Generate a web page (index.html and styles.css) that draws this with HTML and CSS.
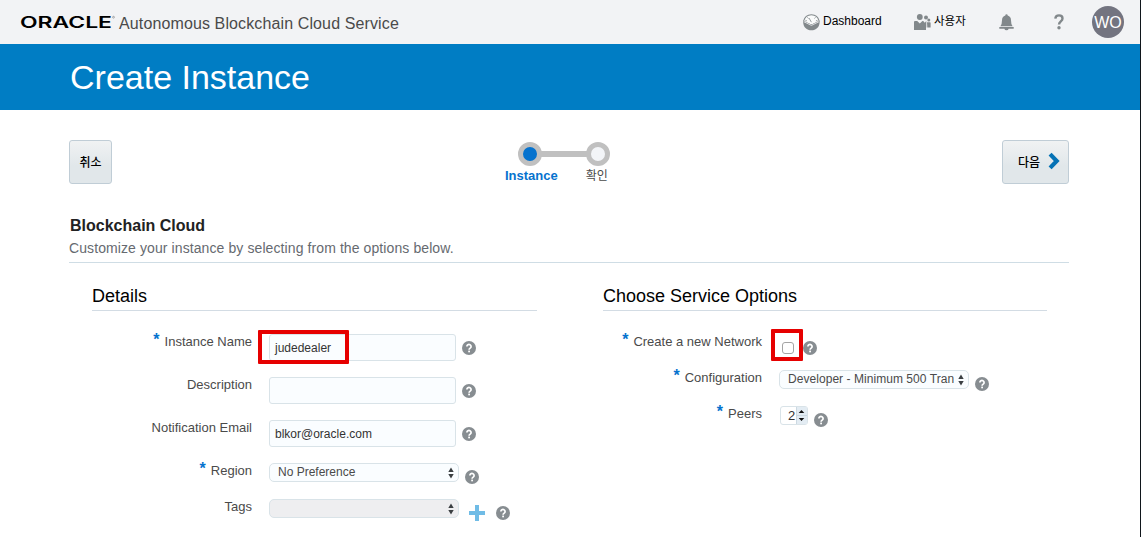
FILE: index.html
```html
<!DOCTYPE html>
<html lang="ko">
<head>
<meta charset="utf-8">
<title>Create Instance</title>
<link rel="stylesheet" href="styles.css">
</head>
<body>
<svg class="defs" aria-hidden="true">
  <symbol id="help" viewBox="0 0 14 14"><circle cx="7" cy="7" r="7" fill="#878d91"/><path d="M4.9 5.5a2.1 2 0 1 1 3.3 1.6Q7.1 7.8 7.1 8.8" fill="none" stroke="#fff" stroke-width="1.7"/><rect x="6.2" y="9.6" width="1.8" height="1.7" fill="#fff"/></symbol>
  <symbol id="sort" viewBox="0 0 6 12"><path d="M3 .5 5.7 4.9H.3zM.3 7.1h5.4L3 11.5z" fill="#3c4043"/></symbol>
</svg>
<div class="page">
  <header class="topbar">
    <svg class="logo" width="96" height="16" viewBox="0 0 96 16" role="img" aria-label="ORACLE">
      <text class="wordmark" x="-1" y="13.700" textLength="92" lengthAdjust="spacingAndGlyphs">ORACLE</text>
      <circle cx="92.500" cy="3.200" r=".9" fill="none" stroke="#777" stroke-width=".6"/>
    </svg>
    <span class="service">Autonomous Blockchain Cloud Service</span>
    <nav class="tools">
      <a class="tool dash">
        <svg width="17" height="17" viewBox="0 0 17 17"><path d="M.6 7.2C1.6 3 4.6.7 8.4.7s6.8 2.3 7.8 6.500L8.4 11.300z" fill="#fafbfb" stroke="#82888b" stroke-width="1.100"/><path d="M2.400 6.300l1.500.6M4.400 3.300l1 1.200M12.500 3.300l-1 1.200M14.500 6.300l-1.600.6M8.400 8.200 6 4" fill="none" stroke="#82888b" stroke-width=".8"/><path d="M.2 7.400l8.200 3 8.200-3C16.900 13 13.200 16.300 8.400 16.300S-.1 13 .2 7.400z" fill="#82888b"/><path d="M.8 7.700l7.600 3.700L16 7.700" fill="none" stroke="#f2f3f5" stroke-width=".8"/></svg>
        <span>Dashboard</span>
      </a>
      <a class="tool users">
        <svg width="17" height="17" viewBox="0 0 17 17" fill="#82888b"><circle cx="5.800" cy="3" r="2.900"/><circle cx="12" cy="3.400" r="2"/><circle cx="14.800" cy="5.900" r="1.500"/><path d="M0 8Q0 7 1 7h2.200L5.800 9.500 8.400 7h.8l1.600 1.700L12.300 7v6.500H12V16H0zM13 8.200h2.900q.7 0 .7.800v4.600h-3.300z"/></svg>
        <span>사용자</span>
      </a>
      <svg class="bell" width="15" height="17" viewBox="0 0 15 17" fill="#82888b"><path d="M7.500.2q1.200 0 1.200 1.300 3.300 1 3.300 4.700 0 4.200 1.600 6.100H1.400Q3 10.400 3 6.200 3 2.500 6.300 1.500 6.300.2 7.500.2zM.3 13.100h14.400v1.600H.3zM5.400 14.700h4.200q-.2 1.500-2.100 1.500t-2.100-1.500z"/></svg>
      <svg class="ask" width="10" height="16" viewBox="0 0 10 16"><path d="M1.300 4.700C1.500 2.500 3 1.400 5 1.400s3.500 1.100 3.500 3c0 2.900-3.500 2.900-3.500 6" fill="none" stroke="#82888b" stroke-width="2.400"/><circle cx="5" cy="13.700" r="1.700" fill="#82888b"/></svg>
      <span class="avatar">WO</span>
    </nav>
  </header>
  <div class="banner"><h1>Create Instance</h1></div>
  <main class="content">
    <div class="wizard">
      <button class="btn cancel">취소</button>
      <div class="train">
        <svg width="92" height="24" viewBox="0 0 92 24"><path d="M12 12h68" stroke="#c0c0c0" stroke-width="6"/><circle cx="12" cy="12" r="9.500" fill="#0572ce" stroke="#c0c0c0" stroke-width="5"/><circle cx="80" cy="12" r="9.500" fill="#f3f5f8" stroke="#c0c0c0" stroke-width="5"/></svg>
        <div class="steps"><b>Instance</b><span>확인</span></div>
      </div>
      <button class="btn next">다음<svg width="12" height="18" viewBox="0 0 12 18"><path d="M2.100 2.100 8.700 9l-6.600 6.900" fill="none" stroke="#0572b5" stroke-width="4.200"/></svg></button>
    </div>
    <div class="intro">
      <h2>Blockchain Cloud</h2>
      <p>Customize your instance by selecting from the options below.</p>
    </div>
    <div class="columns">
      <section class="col">
        <h3>Details</h3>
        <div class="row tall">
          <label class="req"><i>*</i>Instance Name</label>
          <div class="field marked-name"><span class="input">judedealer</span><svg class="help"><use href="#help"/></svg></div>
        </div>
        <div class="row tall">
          <label>Description</label>
          <div class="field"><span class="input"></span><svg class="help"><use href="#help"/></svg></div>
        </div>
        <div class="row tall">
          <label>Notification Email</label>
          <div class="field"><span class="input">blkor@oracle.com</span><svg class="help"><use href="#help"/></svg></div>
        </div>
        <div class="row">
          <label class="req"><i>*</i>Region</label>
          <div class="field"><span class="select"><span>No Preference</span><svg class="sort"><use href="#sort"/></svg></span><svg class="help"><use href="#help"/></svg></div>
        </div>
        <div class="row">
          <label>Tags</label>
          <div class="field"><span class="select off"><span></span><svg class="sort"><use href="#sort"/></svg></span><svg class="plus" viewBox="0 0 16 16"><path d="M8 0v16M0 8h16" stroke="#70bce6" stroke-width="4"/></svg><svg class="help"><use href="#help"/></svg></div>
        </div>
      </section>
      <section class="col right">
        <h3>Choose Service Options</h3>
        <div class="row">
          <label class="req"><i>*</i>Create a new Network</label>
          <div class="field marked-check"><span class="check"></span><svg class="help"><use href="#help"/></svg></div>
        </div>
        <div class="row">
          <label class="req"><i>*</i>Configuration</label>
          <div class="field"><span class="select"><span class="clip">Developer - Minimum 500 Trans</span><svg class="sort"><use href="#sort"/></svg></span><svg class="help"><use href="#help"/></svg></div>
        </div>
        <div class="row">
          <label class="req"><i>*</i>Peers</label>
          <div class="field peers"><span class="spin"><span>2</span><svg width="11" height="17" viewBox="0 0 11 17"><path d="M0 0h11v17H0z" fill="#e3ecf3"/><path d="M0 8.500h11M.5 0v17" stroke="#ccd9e2"/><path d="M5.500 3 8.300 6H2.700zM2.700 11h5.600l-2.800 3z" fill="#111"/></svg></span><svg class="help"><use href="#help"/></svg></div>
        </div>
      </section>
    </div>
  </main>
</div>
</body>
</html>
```
FILE: styles.css
```css
*, *::before { box-sizing: border-box; }
body {
  margin: 0;
  height: 537px;
  overflow: hidden;
  background: #fff;
  font-family: "Liberation Sans", "Noto Sans CJK KR", sans-serif;
  font-size: 12px;
  color: #333;
}
svg { display: block; flex: none; }
.defs { position: absolute; width: 0; height: 0; }
h1, h2, h3, p { margin: 0; font-weight: normal; }
.page { height: 537px; border-right: 1px solid #10161b; }

.topbar { display: flex; height: 44px; padding: 0 16px 0 21px; background: #f2f3f5; }
.logo { margin-top: 14px; overflow: visible; }
.wordmark { font: 600 15.5px Inter, "Liberation Sans", sans-serif; fill: #000; }
.service { margin: 14px 0 0 2px; font-size: 16px; line-height: 20px; letter-spacing: .12px; color: #4a4a4a; white-space: nowrap; }
.tools { display: flex; margin-left: auto; }
.tool { display: flex; color: #000; line-height: 14px; }
.tool svg { margin-top: 14px; }
.tool span { margin-top: 14px; white-space: nowrap; }
.dash { gap: 3px; width: 111px; }
.users { gap: 3px; width: 85px; }
.users span { font-size: 11.5px; }
.bell { margin-top: 14px; }
.ask { margin: 14px 28px 0 40px; }
.avatar { width: 32px; height: 32px; margin-top: 6px; border-radius: 50%; background: #737480; color: #fff; font-size: 16px; line-height: 33px; text-align: center; }

.banner { height: 66px; padding: 14px 0 0 70px; background: #007dc4; color: #fff; }
h1 { font-size: 34px; line-height: 38px; }

.content { padding: 30px 71px 0 69px; }
.wizard { display: flex; justify-content: space-between; height: 44px; }
.btn { height: 44px; padding: 0; border: 1px solid #c0cdd6; border-radius: 3px; background: linear-gradient(#f0f2f3, #e1e7ea 60%, #e1e7ea); color: #000; font: 500 12px "Liberation Sans", "Noto Sans CJK KR", sans-serif; }
.cancel { width: 43px; padding-bottom: 2px; }
.next { display: flex; align-items: center; gap: 8px; width: 67px; padding: 0 0 2px 15px; }
.train { width: 110px; margin: 2px 0 0 4px; }
.train > svg { margin-left: 14px; }
.steps { display: flex; gap: 28px; margin: 2px 0 0 1px; line-height: 15px; }
.steps b { font-size: 13px; color: #0572ce; }
.steps span { padding-top: 1px; white-space: nowrap; color: #4a4a4a; }

.intro { height: 79px; padding-top: 32px; border-bottom: 1px solid #cfdde5; }
h2 { margin-left: 1px; font-size: 16px; line-height: 20px; font-weight: bold; color: #222; }
.intro p { margin-top: 4px; font-size: 14px; line-height: 16px; letter-spacing: .095px; color: #666a70; }

.columns { display: flex; gap: 66px; padding: 22px 0 0 23px; }
.col { width: 445px; }
h3 { height: 26px; margin-bottom: 23px; border-bottom: 1px solid #d3dce4; color: #000; font-size: 18px; line-height: 22px; }
.right h3 { width: 444px; }
.row { display: flex; height: 36px; }
.tall { height: 43px; }
label { width: 160px; font-size: 13px; line-height: 16px; text-align: right; color: #4a4a4a; white-space: nowrap; }
.req { margin-top: -1px; }
label i { margin-right: 5px; color: #0572ce; font: bold 16px/14px "Liberation Sans", sans-serif; vertical-align: 1px; }
.field { position: relative; display: flex; margin-left: 17px; }
.right label { width: 159px; }
.input { width: 187px; height: 27px; padding: 0 5px; border: 1px solid #d9e3e8; border-radius: 3px; background: #fafdff; line-height: 26px; color: #333; }
.help { width: 14px; height: 14px; margin: 7px 0 0 6px; }
.select { display: flex; align-items: center; justify-content: space-between; width: 190px; height: 19px; padding: 0 4px 0 8px; border: 1px solid #d9e3e8; border-radius: 5px; background: #fafdff; line-height: 16px; color: #4a4a4a; }
.select span { padding-bottom: 1px; }
.clip { width: 166px; overflow: hidden; white-space: nowrap; letter-spacing: .05px; }
.off { background: #eeeef0; }
.sort { width: 6px; height: 12px; }
.plus { width: 16px; height: 16px; margin: 6px 5px 0 10px; }
.check { width: 12px; height: 12px; margin: 8px 3px 0 3px; border: 1px solid #a4a4a4; border-radius: 3px; background: #fff; }
.peers { margin-left: 18px; }
.spin { display: flex; justify-content: space-between; width: 28px; height: 19px; padding-left: 7px; border: 1px solid #d9e3e8; border-radius: 3px; line-height: 17px; font-size: 13px; }
.marked-name::before, .marked-check::before { content: ""; position: absolute; border: 4px solid #e60000; border-radius: 1px; }
.marked-name::before { left: -11px; top: -4px; width: 91px; height: 34px; }
.marked-check::before { left: -8px; top: -5px; width: 32px; height: 32px; }
```
